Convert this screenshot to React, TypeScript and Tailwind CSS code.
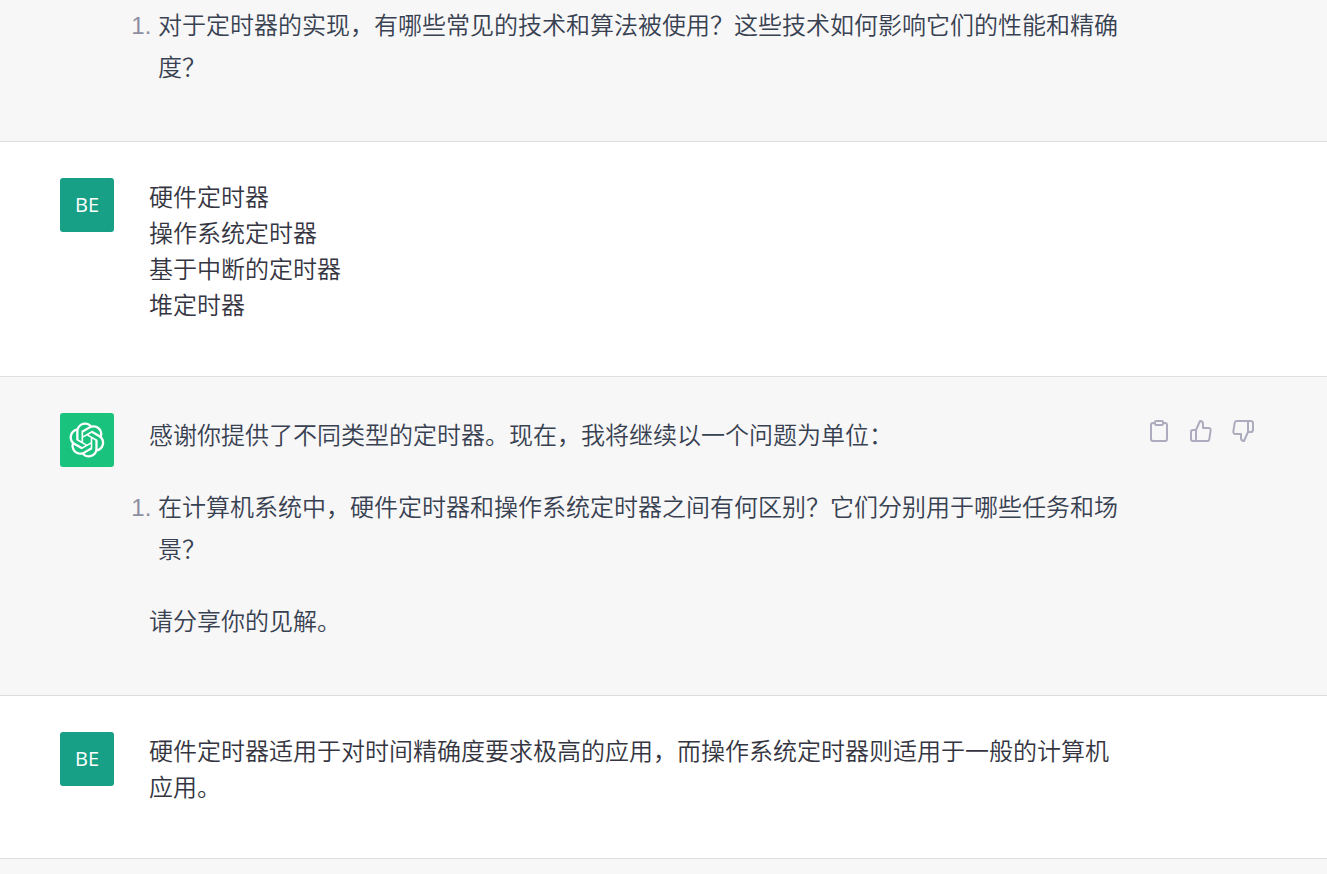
import type { ReactNode } from 'react';
import { FiClipboard, FiThumbsDown, FiThumbsUp } from 'react-icons/fi';

function OpenAILogo() {
  return (
    <svg viewBox="0 0 41 41" fill="none" className="h-9 w-9" role="img" aria-label="ChatGPT">
      <path
        fill="currentColor"
        d="M37.5324 16.8707C37.9808 15.5241 38.1363 14.0974 37.9886 12.6859C37.8409 11.2744 37.3934 9.91076 36.676 8.68622C35.6126 6.83404 33.9882 5.3676 32.0373 4.4985C30.0864 3.62941 27.9098 3.40259 25.8215 3.85078C24.8796 2.7893 23.7219 1.94125 22.4257 1.36341C21.1295 0.785575 19.7249 0.491269 18.3058 0.500197C16.1708 0.495044 14.0893 1.16803 12.3614 2.42214C10.6335 3.67624 9.34853 5.44666 8.6917 7.47815C7.30085 7.76286 5.98686 8.3414 4.8377 9.17505C3.68854 10.0087 2.73073 11.0782 2.02839 12.312C0.956464 14.1591 0.498905 16.2988 0.721698 18.4228C0.944492 20.5467 1.83612 22.5449 3.268 24.1293C2.81966 25.4759 2.66413 26.9026 2.81182 28.3141C2.95951 29.7256 3.40701 31.0892 4.12437 32.3138C5.18791 34.1659 6.8123 35.6322 8.76321 36.5013C10.7141 37.3704 12.8907 37.5973 14.9789 37.1492C15.9208 38.2107 17.0786 39.0587 18.3747 39.6366C19.6709 40.2144 21.0755 40.5087 22.4946 40.4998C24.6307 40.5054 26.7133 39.8321 28.4418 38.5772C30.1704 37.3223 31.4556 35.5506 32.1119 33.5179C33.5027 33.2332 34.8167 32.6547 35.9659 31.821C37.115 30.9874 38.0728 29.9178 38.7752 28.684C39.8458 26.8371 40.3023 24.6979 40.0789 22.5748C39.8556 20.4517 38.9639 18.4544 37.5324 16.8707ZM22.4978 37.8849C20.7443 37.8874 19.0459 37.2733 17.6994 36.1501C17.7601 36.117 17.8666 36.0586 17.936 36.0161L25.9004 31.4156C26.1003 31.3019 26.2663 31.137 26.3813 30.9378C26.4964 30.7386 26.5563 30.5124 26.5549 30.2825V19.0542L29.9213 20.998C29.9389 21.0068 29.9541 21.0198 29.9656 21.0359C29.977 21.052 29.9842 21.0707 29.9867 21.0902V30.3889C29.9842 32.375 29.1946 34.2791 27.7909 35.6841C26.3872 37.0892 24.4838 37.8806 22.4978 37.8849ZM6.39227 31.0064C5.51397 29.4888 5.19742 27.7107 5.49804 25.9832C5.55718 26.0187 5.66048 26.0818 5.73461 26.1244L13.699 30.7248C13.8975 30.8408 14.1233 30.902 14.3532 30.902C14.583 30.902 14.8088 30.8408 15.0073 30.7248L24.731 25.1103V28.9979C24.7321 29.0177 24.7283 29.0376 24.7199 29.0556C24.7115 29.0736 24.6988 29.0893 24.6829 29.1012L16.6317 33.7497C14.9096 34.7416 12.8643 35.0097 10.9447 34.4954C9.02506 33.9811 7.38785 32.7263 6.39227 31.0064ZM4.29707 13.6194C5.17156 12.0998 6.55279 10.9364 8.19885 10.3327C8.19885 10.4013 8.19491 10.5228 8.19491 10.6071V19.808C8.19351 20.0378 8.25334 20.2638 8.36823 20.4629C8.48312 20.6619 8.64893 20.8267 8.84863 20.9404L18.5723 26.5542L15.206 28.4979C15.1894 28.5089 15.1703 28.5155 15.1505 28.5173C15.1307 28.5191 15.1107 28.516 15.0924 28.5082L7.04046 23.8557C5.32135 22.8601 4.06716 21.2235 3.55289 19.3046C3.03862 17.3858 3.30624 15.3413 4.29707 13.6194ZM31.955 20.0556L22.2312 14.4411L25.5976 12.4981C25.6142 12.4872 25.6333 12.4805 25.6531 12.4787C25.6729 12.4769 25.6928 12.4801 25.7111 12.4879L33.7631 17.1364C34.9967 17.849 36.0017 18.8982 36.6606 20.1613C37.3194 21.4244 37.6047 22.849 37.4832 24.2684C37.3617 25.6878 36.8382 27.0432 35.9743 28.1759C35.1103 29.3086 33.9415 30.1717 32.6047 30.6641C32.6047 30.5947 32.6047 30.4733 32.6047 30.3889V21.188C32.6066 20.9586 32.5474 20.7328 32.4332 20.5338C32.319 20.3348 32.154 20.1698 31.955 20.0556ZM35.3055 15.0128C35.2464 14.9765 35.1431 14.9142 35.069 14.8717L27.1045 10.2712C26.906 10.1554 26.6803 10.0943 26.4504 10.0943C26.2206 10.0943 25.9948 10.1554 25.7963 10.2712L16.0726 15.8858V11.9982C16.0715 11.9783 16.0753 11.9585 16.0837 11.9405C16.0921 11.9225 16.1048 11.9068 16.1207 11.8949L24.1719 7.25025C25.4053 6.53903 26.8158 6.19376 28.2383 6.25482C29.6608 6.31589 31.0364 6.78077 32.2044 7.59508C33.3723 8.40939 34.2842 9.53945 34.8334 10.8531C35.3826 12.1667 35.5464 13.6095 35.3055 15.0128ZM14.2424 21.9419L10.8752 19.9981C10.8576 19.9893 10.8423 19.9763 10.8309 19.9602C10.8195 19.9441 10.8122 19.9254 10.8098 19.9058V10.6071C10.8107 9.18295 11.2173 7.78848 11.9819 6.58696C12.7466 5.38544 13.8377 4.42659 15.1275 3.82264C16.4173 3.21869 17.8524 2.99464 19.2649 3.1767C20.6775 3.35876 22.0089 3.93941 23.1034 4.85067C23.0427 4.88379 22.937 4.94215 22.8668 4.98473L14.9024 9.58517C14.7025 9.69878 14.5366 9.86356 14.4215 10.0626C14.3065 10.2616 14.2466 10.4877 14.2479 10.7175L14.2424 21.9419ZM16.071 17.9991L20.4018 15.4978L24.7325 17.9975V22.9985L20.4018 25.4983L16.071 22.9985V17.9991Z"
      />
    </svg>
  );
}

function MessageActions() {
  const actions = [
    { label: 'Copy', Icon: FiClipboard },
    { label: 'Good response', Icon: FiThumbsUp },
    { label: 'Bad response', Icon: FiThumbsDown },
  ];

  return (
    <>
      {actions.map(({ label, Icon }) => (
        <button key={label} type="button" aria-label={label} className="rounded-md p-1.5 hover:bg-gray-200">
          <Icon className="h-6 w-6" />
        </button>
      ))}
    </>
  );
}

interface RowProps {
  avatar?: ReactNode;
  actions?: ReactNode;
  children: ReactNode;
}

function Row({ avatar, actions, children }: RowProps) {
  return (
    <div className="mx-auto flex max-w-[1327px] px-[60px]">
      <div className="mr-[35px] w-[54px] shrink-0">{avatar}</div>
      <div className="min-w-0 flex-1 pt-0.5">{children}</div>
      <div className="flex w-[147px] shrink-0 items-start justify-end gap-1.5 pr-1.5 text-[#acacbe]">
        {actions}
      </div>
    </div>
  );
}

function UserMessage({ lines }: { lines: string[] }) {
  return (
    <section className="border-b border-[#e0e0e0] bg-white pt-9 pb-[52px]">
      <Row
        avatar={
          <div className="flex h-[54px] w-[54px] items-center justify-center rounded-[3px] bg-[#17a085] font-['Open_Sans',sans-serif] text-xl font-normal text-white">
            BE
          </div>
        }
      >
        <div className="leading-9 text-[#343541]">
          {lines.map((line) => (
            <p key={line}>{line}</p>
          ))}
        </div>
      </Row>
    </section>
  );
}

function QuestionList({ question }: { question: string }) {
  return (
    <ol className="list-decimal pl-[9px] marker:text-[#8e8ea0]">
      <li>{question}</li>
    </ol>
  );
}

export default function App() {
  return (
    <main
      lang="zh-CN"
      className="flex min-h-screen flex-col bg-[#f7f7f7] font-['Liberation_Sans','Noto_Sans_CJK_SC',sans-serif] text-2xl font-[350]"
    >
      <section className="border-b border-[#dcdcdd] pt-[3px] pb-[52px] leading-[42px] text-[#374151]">
        <Row>
          <QuestionList question="对于定时器的实现，有哪些常见的技术和算法被使用？这些技术如何影响它们的性能和精确度？" />
        </Row>
      </section>

      <UserMessage lines={['硬件定时器', '操作系统定时器', '基于中断的定时器', '堆定时器']} />

      <section className="border-b border-[#dcdcdd] pt-9 pb-[52px] leading-[42px] text-[#374151]">
        <Row
          avatar={
            <div className="flex h-[54px] w-[54px] items-center justify-center rounded-[3px] bg-[#19c37d] text-white">
              <OpenAILogo />
            </div>
          }
          actions={<MessageActions />}
        >
          <div className="flex flex-col gap-[30px]">
            <p>感谢你提供了不同类型的定时器。现在，我将继续以一个问题为单位：</p>
            <QuestionList question="在计算机系统中，硬件定时器和操作系统定时器之间有何区别？它们分别用于哪些任务和场景？" />
            <p>请分享你的见解。</p>
          </div>
        </Row>
      </section>

      <UserMessage lines={['硬件定时器适用于对时间精确度要求极高的应用，而操作系统定时器则适用于一般的计算机应用。']} />
    </main>
  );
}
